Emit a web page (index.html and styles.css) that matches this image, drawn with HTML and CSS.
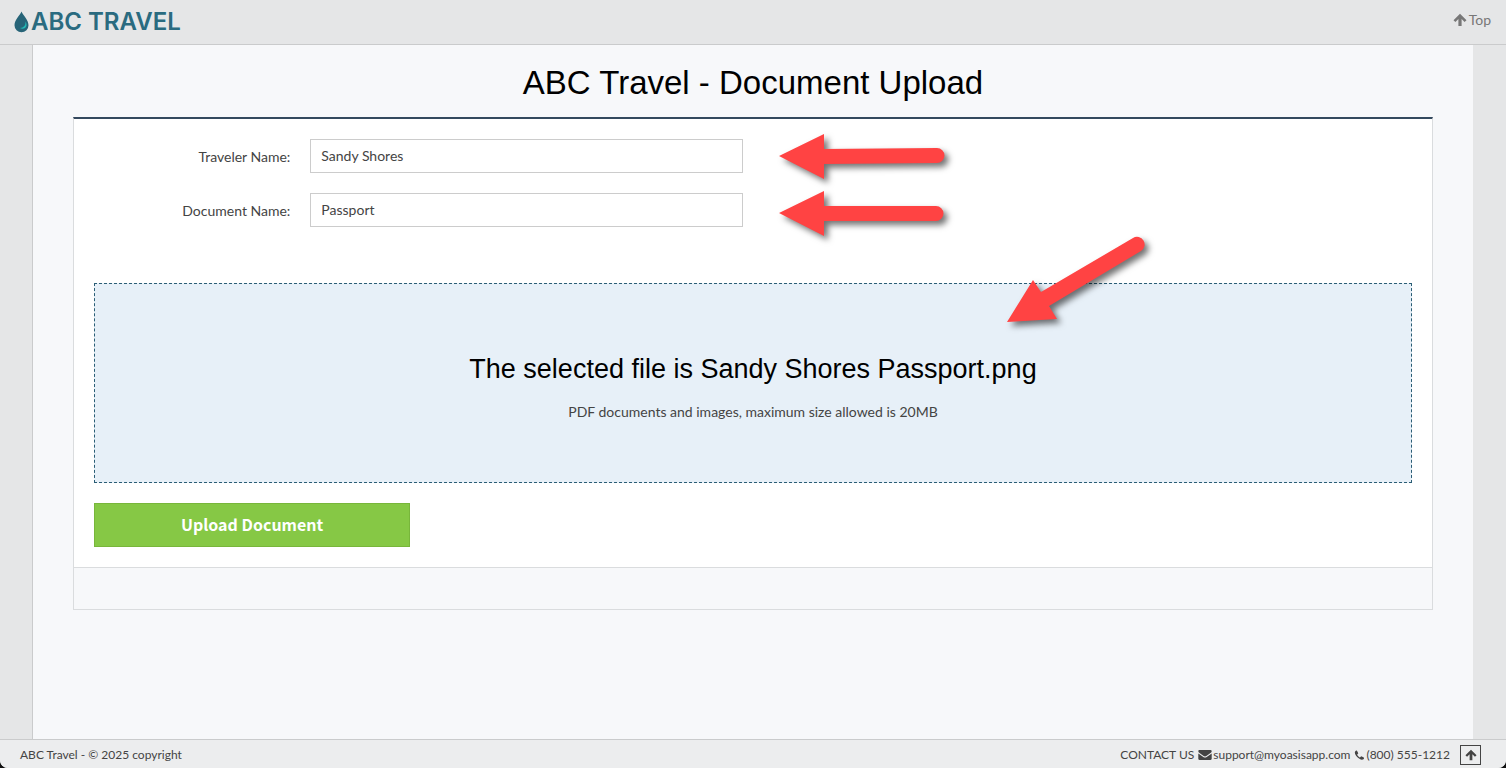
FILE: index.html
```html
<!DOCTYPE html>
<html lang="en">
<head>
    <meta charset="UTF-8">
    <meta name="viewport" content="width=device-width, initial-scale=1.0">
    <title>ABC Travel - Document Upload</title>
    <link rel="stylesheet" href="styles.css">
</head>
<body>
    <header class="header">
        <a class="logo" href="#top">
            <svg class="logo-drop" viewBox="0 0 15 22" aria-hidden="true">
                <path d="M7.5 0.5C6 4 0.5 9 0.5 14.2a7 7 0 0 0 14 0C14.5 9 9 4 7.5 0.5z" fill="#276478"/>
                <path d="M11.300 10.500c.8 3.800-1.600 6.200-5.300 6.600 2.800 1.800 6 .2 6.500-2.600.2-1.500-.3-2.900-1.200-4z" fill="#22b8b4"/>
            </svg>
            <span>ABC TRAVEL</span>
        </a>
        <a class="top-link" href="#top">
            <svg class="icon" viewBox="0 0 14 14" aria-hidden="true"><path d="M7 .8l6.500 6.400-1.900 1.900-3-3V13H5.400V6.100l-3 3L.5 7.200z" fill="currentColor"/></svg>
            Top
        </a>
    </header>

    <main class="content" id="top">
        <h1>ABC Travel - Document Upload</h1>
        <form class="panel">
            <div class="panel-body">
                <div class="field">
                    <label for="traveler">Traveler Name:</label>
                    <input type="text" id="traveler" value="Sandy Shores">
                </div>
                <div class="field">
                    <label for="document">Document Name:</label>
                    <input type="text" id="document" value="Passport">
                </div>
                <div class="dropzone">
                    <h2>The selected file is Sandy Shores Passport.png</h2>
                    <p>PDF documents and images, maximum size allowed is 20MB</p>
                </div>
                <div class="actions">
                    <button class="upload" type="button">Upload Document</button>
                </div>
            </div>
            <div class="panel-footer"></div>

            <!-- callout arrows -->
            <svg class="arrows" viewBox="0 0 420 220" aria-hidden="true">
                <g fill="#ff4343">
                    <path d="M26 37L71 15V30L184 29a7.500 7.500 0 0 1 0 15L71 45V60z"/>
                    <path d="M26 94L71 72V87H183a7.500 7.500 0 0 1 0 15H71V117z"/>
                    <path d="M254 203L280 161L288 173L380 119a7.500 7.500 0 0 1 8 13L296 187L304 200z"/>
                </g>
            </svg>
        </form>
    </main>

    <footer class="footer">
        <span>ABC Travel - © 2025 copyright</span>
        <div class="contact">
            <span>CONTACT US</span>
            <a href="mailto:support@myoasisapp.com">
                <svg class="icon" viewBox="0 0 14 12" aria-hidden="true"><path d="M1.500 1h11A1.200 1.200 0 0 1 13.700 2.200c0 .8-.5 1.400-1.200 1.900L8.300 7c-.9.600-1.700.600-2.600 0L1.500 4.100C.8 3.600.3 3 .3 2.200.3 1.500.8 1 1.500 1zM.3 4.400l5 3.500c1.200.8 2.200.8 3.400 0l5-3.500v5.400c0 .7-.5 1.200-1.200 1.200h-11C.8 11 .3 10.500.3 9.800z" fill="currentColor"/></svg>
                support@myoasisapp.com
            </a>
            <a href="tel:8005551212">
                <svg class="icon phone" viewBox="0 0 12 12" aria-hidden="true"><path d="M3.100 1l1.600 3c0 .5-1.300 1.200-1.300 1.700.5 1.200 1.800 2.500 3 3 .5 0 1.200-1.300 1.700-1.300l2.900 1.600c.2 1.300-1 2.200-2.300 2.200C5.200 11 1 6.600.9 3.400.9 2.100 1.800.8 3.100 1z" fill="currentColor"/></svg>
                (800) 555-1212
            </a>
            <a class="to-top" href="#top" aria-label="Back to top">
                <svg class="icon" viewBox="0 0 14 14" aria-hidden="true"><path d="M7 .8l6.500 6.400-1.900 1.900-3-3V13H5.400V6.100l-3 3L.5 7.200z" fill="currentColor"/></svg>
            </a>
        </div>
    </footer>
</body>
</html>
```
FILE: styles.css
```css
* {
    box-sizing: border-box;
}
html {
    background: #111;
}
body {
    margin: 0;
    min-height: 100vh;
    display: flex;
    flex-direction: column;
    font-family: Lato, sans-serif;
    font-size: 14px;
    line-height: 20px;
    color: #444;
    background: #e5e6e7;
    border-radius: 0 0 8px 8px;
    overflow: hidden;
}
a {
    color: inherit;
    text-decoration: none;
}
.header {
    display: flex;
    justify-content: space-between;
    align-items: center;
    height: 45px;
    padding: 0 15px 0 14px;
    border-bottom: 1px solid #cacbcc;
}
.logo {
    display: flex;
    align-items: center;
    gap: 2px;
    font-family: Inter, sans-serif;
    font-size: 24px;
    font-weight: 600;
    color: #2a6b80;
}
.logo-drop {
    width: 15px;
    height: 22px;
}
.top-link {
    display: flex;
    align-items: center;
    gap: 2px;
    padding-bottom: 4px;
    color: #777;
}
.icon {
    width: 14px;
    height: 14px;
}
.content {
    flex: 1;
    margin: 0 33px 0 32px;
    padding: 0 40px;
    background: #f7f8fa;
    border-left: 1px solid #cacbcc;
}
h1, h2 {
    margin: 0;
    font-family: "Liberation Sans", Arial, sans-serif;
    font-weight: 400;
    color: #000;
    text-align: center;
}
h1 {
    padding: 18px 0 14px;
    font-size: 33px;
    line-height: 40px;
}
.panel {
    position: relative;
    border: 1px solid #dadcde;
    border-top: 2px solid #34495e;
}
.panel-body {
    padding: 20px 0;
    background: #fff;
}
.field {
    display: grid;
    grid-template-columns: 2fr 4fr 6fr;
    margin-bottom: 20px;
}
.field label {
    padding: 8px 10px 0;
    text-align: right;
}
.field input {
    height: 34px;
    margin: 0 10px;
    padding: 0 10px 2px;
    border: 1px solid #ccc;
    font: inherit;
    color: #444;
}
.dropzone {
    margin: 56px 20px 20px;
    padding: 68px 20px 60px;
    background: #e7f0f8;
    border: 1px dashed #2a5d75;
    text-align: center;
}
h2 {
    font-size: 27px;
    line-height: 34px;
}
.dropzone p {
    margin: 16px 0 0;
}
.actions {
    padding: 0 20px;
}
.upload {
    width: 24%;
    height: 44px;
    padding: 0 0 2px;
    background: #86c845;
    border: 1px solid #78b63b;
    font-family: "Noto Sans CJK SC", sans-serif;
    font-size: 16px;
    font-weight: 700;
    color: #fff;
    cursor: pointer;
}
.panel-footer {
    height: 42px;
    border-top: 1px solid #dadcde;
}
.arrows {
    position: absolute;
    top: 0;
    left: 50%;
    width: 420px;
    height: 220px;
    pointer-events: none;
    filter: drop-shadow(4px 4px 3px rgba(0, 0, 0, 0.55));
}
.footer {
    display: flex;
    justify-content: space-between;
    align-items: center;
    height: 29px;
    padding: 2px 25px 0 20px;
    background: #ecedee;
    border-top: 1px solid #cacbcc;
    font-size: 12px;
}
.contact, .contact a {
    display: flex;
    align-items: center;
}
.contact {
    gap: 4px;
}
.contact a {
    gap: 1px;
}
.contact .icon {
    width: 14px;
    height: 12px;
}
.contact .phone {
    width: 11px;
}
.contact .to-top {
    justify-content: center;
    width: 21px;
    height: 20px;
    margin-left: 6px;
    border: 1px solid #444;
}
```
